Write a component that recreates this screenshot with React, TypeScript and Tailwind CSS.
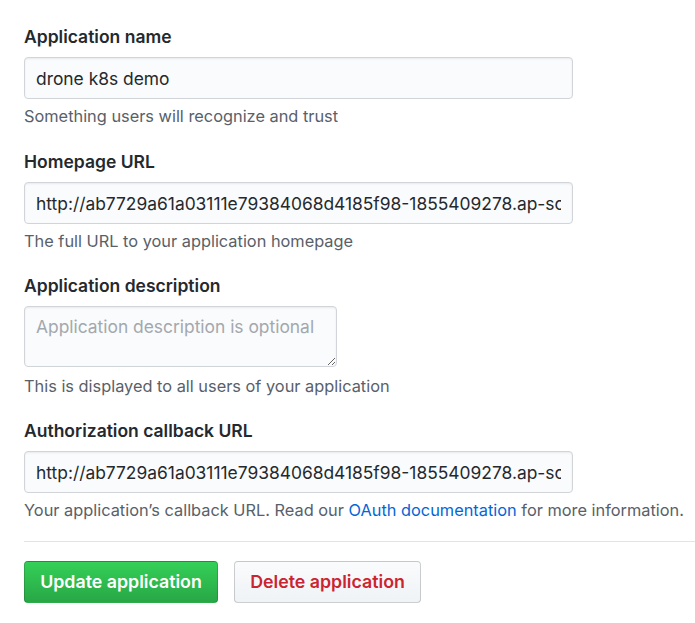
import React from 'react'

const URL_VALUE =
  'http://ab7729a61a03111e79384068d4185f98-1855409278.ap-southeast-1.elb.amazonaws.com'

function Label({ children }: { children: React.ReactNode }) {
  return (
    <label className="block text-[17.5px] font-semibold leading-[24px] text-[#24292e]">
      {children}
    </label>
  )
}

function Note({ children, className = '' }: { children: React.ReactNode; className?: string }) {
  return (
    <p className={`text-[16.35px] leading-[24px] text-[#586069] ${className}`}>{children}</p>
  )
}

const inputCls =
  'mt-2 block h-[42px] w-[549px] rounded-[4px] border border-[#d1d5da] bg-[#fafbfc] px-[11px] text-[17.4px] text-[#24292e] outline-none shadow-[inset_0_1px_2px_rgba(27,31,35,0.075)]'

export default function App() {
  return (
    <div className="min-h-screen bg-white pt-[25px] pl-6 font-['Inter',sans-serif]">
      {/* Application name */}
      <Label>Application name</Label>
      <input className={inputCls} defaultValue="drone k8s demo" readOnly />
      <Note className="mt-[5px]">Something users will recognize and trust</Note>

      {/* Homepage */}
      <div className="mt-[22px]">
        <Label>Homepage URL</Label>
        <input className={inputCls} defaultValue={URL_VALUE} readOnly />
        <Note className="mt-[5px]">The full URL to your application homepage</Note>
      </div>

      {/* Description */}
      <div className="mt-[21px]">
        <Label>Application description</Label>
        <textarea
          className="mt-2 block h-[61px] w-[313px] resize rounded-[4px] border border-[#d1d5da] bg-[#fafbfc] px-[11px] py-[8px] text-[17.4px] leading-[24px] text-[#24292e] outline-none placeholder:text-[#a3a8ae] shadow-[inset_0_1px_2px_rgba(27,31,35,0.075)]"
          placeholder="Application description is optional"
        />
        <Note className="mt-[7px]">This is displayed to all users of your application</Note>
      </div>

      {/* Callback */}
      <div className="mt-[21px]">
        <Label>Authorization callback URL</Label>
        <input className={inputCls} defaultValue={URL_VALUE} readOnly />
        <Note className="mt-[5px]">
          Your application’s callback URL. Read our{' '}
          <a href="#" className="text-[#0366d6]">
            OAuth documentation
          </a>{' '}
          for more information.
        </Note>
      </div>

      <div className="mt-[19px] border-t border-[#e1e4e8]" />

      <div className="mt-[19px] flex gap-4">
        <button
          type="button"
          className="h-[42px] w-[194px] rounded-[4px] border border-[rgba(27,31,35,0.2)] bg-gradient-to-b from-[#34d058] to-[#28a745] text-[17.8px] font-semibold text-white"
        >
          Update application
        </button>
        <button
          type="button"
          className="h-[42px] w-[187px] rounded-[4px] border border-[rgba(27,31,35,0.2)] bg-gradient-to-b from-[#fafbfc] to-[#eff3f6] text-[17.8px] font-semibold text-[#cb2431]"
        >
          Delete application
        </button>
      </div>
    </div>
  )
}
